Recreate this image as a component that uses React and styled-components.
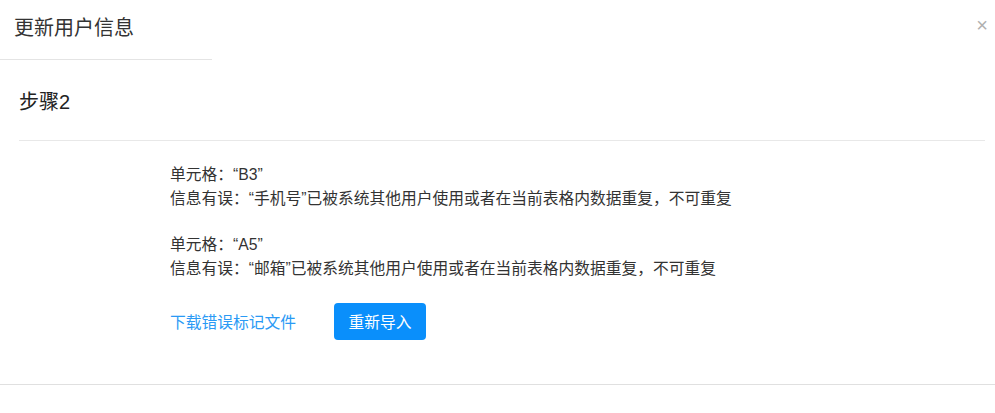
import React from "react";
import styled, { createGlobalStyle } from "styled-components";

const Global = createGlobalStyle`
  body {
    margin: 0;
    background: #fff;
    font-family: "Liberation Sans", "Noto Sans CJK SC", sans-serif;
    color: #333;
  }
`;

const errors = [
  { cell: "B3", field: "手机号" },
  { cell: "A5", field: "邮箱" },
];

const App = () => {
  return (
    <>
      <Global />
      <Dialog>
        <Header>
          <Title>更新用户信息</Title>
          <Close>×</Close>
        </Header>
        <Body>
          <Step>步骤2</Step>
          <Errors>
            {errors.map((e) => (
              <ErrorItem key={e.cell}>
                <Line>单元格：“{e.cell}”</Line>
                <Line>
                  信息有误：“{e.field}”已被系统其他用户使用或者在当前表格内数据重复，不可重复
                </Line>
              </ErrorItem>
            ))}
            <Actions>
              <Link href="#">下载错误标记文件</Link>
              <Button>重新导入</Button>
            </Actions>
          </Errors>
        </Body>
      </Dialog>
    </>
  );
};

const Dialog = styled.div`
  width: 995px;
  height: 413px;
  background: #fff;
`;

const Header = styled.div`
  position: relative;
  height: 59px;
`;

const Title = styled.div`
  width: 198px;
  height: 59px;
  padding-left: 14px;
  border-bottom: 1px solid #e4e4e4;
  font-size: 20px;
  line-height: 56px;
  color: #333;
`;

const Close = styled.span`
  position: absolute;
  right: 7px;
  top: 13px;
  font-size: 20px;
  line-height: 24px;
  color: #b0b0b0;
`;

const Body = styled.div`
  padding: 0 10px 0 19px;
  height: 325px;
  border-bottom: 1px solid #e0e0e0;
`;

const Step = styled.div`
  height: 81px;
  border-bottom: 1px solid #e8e8e8;
  font-size: 20px;
  line-height: 86px;
  color: #222;
`;

const Errors = styled.div`
  padding: 22px 0 0 151px;
`;

const ErrorItem = styled.div`
  margin-bottom: 22px;
`;

const Line = styled.div`
  font-size: 15.75px;
  line-height: 24px;
  color: #333;
`;

const Actions = styled.div`
  display: flex;
  align-items: center;
  gap: 38px;
  margin-top: 5px;
`;

const Link = styled.a`
  font-size: 15.75px;
  color: #2a9af5;
  text-decoration: none;
`;

const Button = styled.button`
  width: 92px;
  height: 37px;
  border: none;
  border-radius: 4px;
  background: #0a8ffb;
  color: #fff;
  font-size: 15.75px;
  font-family: inherit;
  cursor: pointer;
`;

export default App;
